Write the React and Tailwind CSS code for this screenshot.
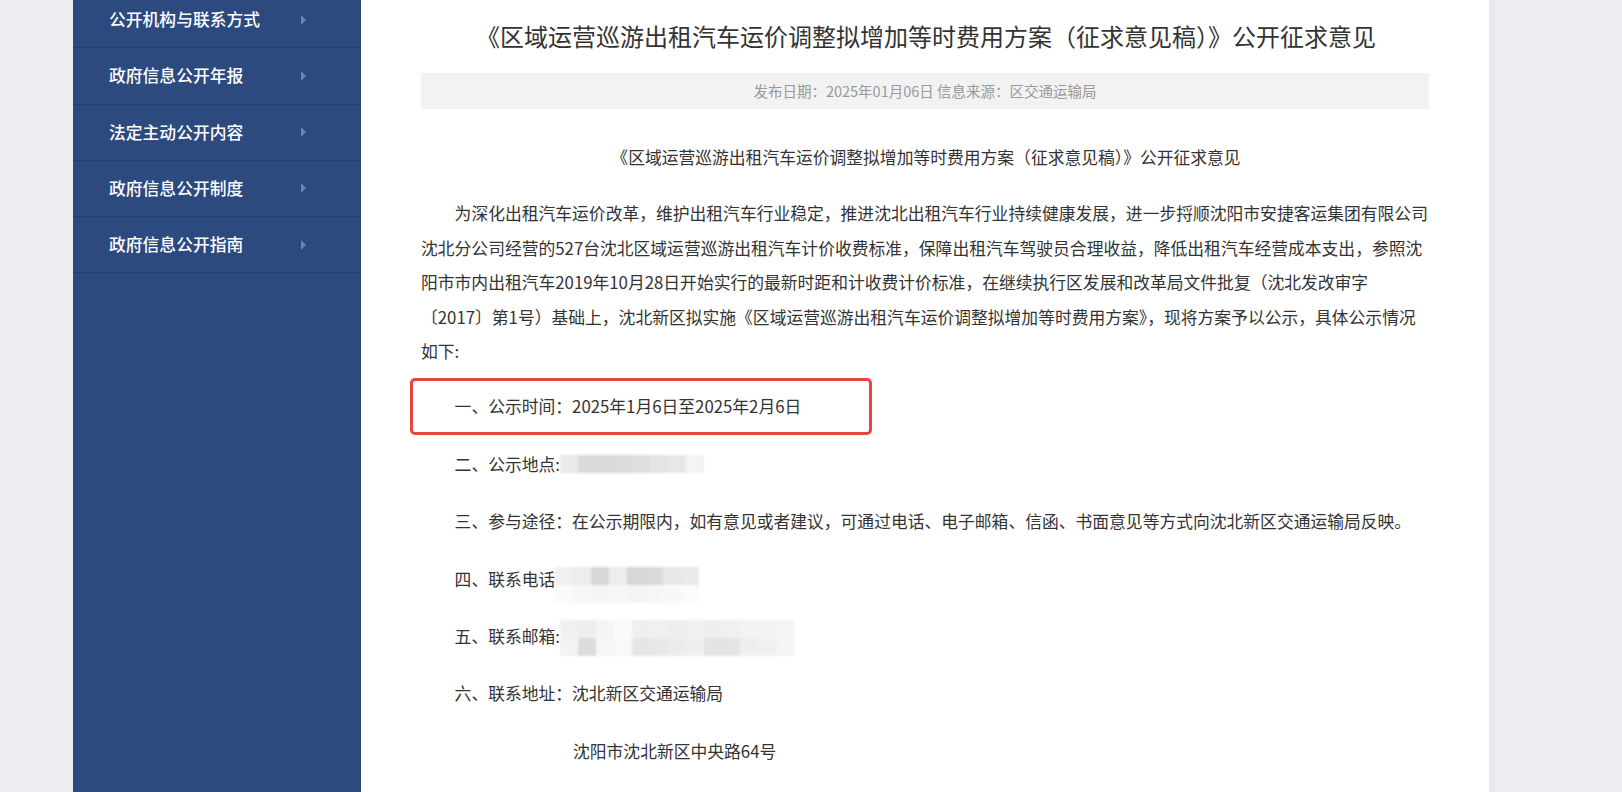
import React from "react";

const menu = [
  "公开机构与联系方式",
  "政府信息公开年报",
  "法定主动公开内容",
  "政府信息公开制度",
  "政府信息公开指南",
];

// mosaic blocks standing in for the redacted contact details
function Mosaic({ rows, cell }) {
  return (
    <span className="flex flex-col blur-[1px]">
      {rows.map((row, i) => (
        <span key={i} className="flex">
          {row.map((c, j) => (
            <span key={j} className="block" style={{ width: cell[0], height: cell[1], background: c }} />
          ))}
        </span>
      ))}
    </span>
  );
}

export default function App() {
  return (
    <div className="h-[792px] overflow-hidden bg-[#eceef3] flex font-['Noto_Sans_CJK_SC','Microsoft_YaHei',sans-serif]">
      <div className="w-[73px] shrink-0" />

      {/* left menu */}
      <aside className="w-[288px] shrink-0 bg-[#2c4a7e]">
        <ul className="-mt-[8px]">
          {menu.map((item) => (
            <li
              key={item}
              className="h-[56.25px] border-b border-[#233f6c] flex items-center justify-between pl-[36px] pr-[55px] text-white text-[16.8px] font-medium"
            >
              <span>{item}</span>
              <span className="w-0 h-0 border-l-[5px] border-l-[#6c84ae] border-y-[5px] border-y-transparent" />
            </li>
          ))}
        </ul>
      </aside>

      {/* article */}
      <main className="w-[1128px] shrink-0 bg-white pl-[60px] pr-[58px] pt-[18px] text-[#333]">
        <h1 className="text-[24px] leading-[36px] text-center text-[#333] font-normal">
          《区域运营巡游出租汽车运价调整拟增加等时费用方案（征求意见稿）》公开征求意见
        </h1>
        <div className="mt-[19px] mr-[2px] h-[36px] bg-[#f2f2f2] flex items-center justify-center text-[14.5px] text-[#999]">
          发布日期：2025年01月06日 信息来源：区交通运输局
        </div>

        <div className="text-[16.8px] leading-[34.4px]">
          <p className="mt-[31px] mb-[22px] text-center">
            《区域运营巡游出租汽车运价调整拟增加等时费用方案（征求意见稿）》公开征求意见
          </p>
          <p className="indent-[2em] mb-[21px]">
            为深化出租汽车运价改革，维护出租汽车行业稳定，推进沈北出租汽车行业持续健康发展，进一步捋顺沈阳市安捷客运集团有限公司沈北分公司经营的527台沈北区域运营巡游出租汽车计价收费标准，保障出租汽车驾驶员合理收益，降低出租汽车经营成本支出，参照沈阳市市内出租汽车2019年10月28日开始实行的最新时距和计收费计价标准，在继续执行区发展和改革局文件批复（沈北发改审字
            <br />
            〔2017〕第1号）基础上，沈北新区拟实施《区域运营巡游出租汽车运价调整拟增加等时费用方案》，现将方案予以公示，具体公示情况<br />如下:
          </p>

          <p className="relative indent-[2em] mb-[23px]">
            一、公示时间：2025年1月6日至2025年2月6日
            <span className="absolute -left-[11px] -top-[11px] w-[462px] h-[57px] border-[3px] border-[#e9463d] rounded-[5px]" />
          </p>

          <p className="pl-[2em] mb-[23px] h-[34.4px] flex items-center">
            <span>二、公示地点:</span>
            <Mosaic
              cell={["18px", "18px"]}
              rows={[["#e9e9e9", "#dadada", "#d9d9d9", "#dcdcdc", "#dedede", "#e4e4e4", "#e7e7e7", "#f3f3f3"]]}
            />
          </p>

          <p className="pl-[2em] mb-[23px]">
            三、参与途径：在公示期限内，如有意见或者建议，可通过电话、电子邮箱、信函、书面意见等方式向沈北新区交通运输局反映。
          </p>

          <p className="pl-[2em] mb-[23px] h-[34.4px] flex items-center">
            <span>四、联系电话</span>
            <span className="flex translate-y-[6px]">
              <Mosaic
                cell={["18px", "18px"]}
                rows={[
                  ["#f0f0f0", "#ececec", "#d8d8d8", "#ececec", "#d7d7d7", "#d9d9d9", "#e8e8e8", "#eaeaea"],
                  ["#fafafa", "#f6f6f6", "#f5f5f5", "#f7f7f7", "#f4f4f4", "#f6f6f6", "#f8f8f8", "#fbfbfb"],
                ]}
              />
            </span>
          </p>

          <p className="pl-[2em] mb-[23px] h-[34.4px] flex items-center">
            <span>五、联系邮箱:</span>
            <span className="flex translate-y-[2px]">
              <Mosaic
                cell={["18px", "18px"]}
                rows={[
                  ["#f0f0f0", "#ededed", "#f5f5f5", "#fafafa", "#efefef", "#f0f0f0", "#eeeeee", "#f1f1f1", "#eeeeee", "#f0f0f0", "#f3f3f3", "#f2f2f2", "#f4f4f4"],
                  ["#f3f3f3", "#dcdcdc", "#f6f6f6", "#f9f9f9", "#e5e5e5", "#e8e8e8", "#ececec", "#efefef", "#e3e3e3", "#e4e4e4", "#efefef", "#f0f0f0", "#f5f5f5"],
                ]}
              />
            </span>
          </p>

          <p className="pl-[2em] mb-[23px]">六、联系地址：沈北新区交通运输局</p>
          <p className="pl-[152px]">沈阳市沈北新区中央路64号</p>
        </div>
      </main>

      <div className="w-[6px] shrink-0 bg-[#e5e8ee]" />
    </div>
  );
}
